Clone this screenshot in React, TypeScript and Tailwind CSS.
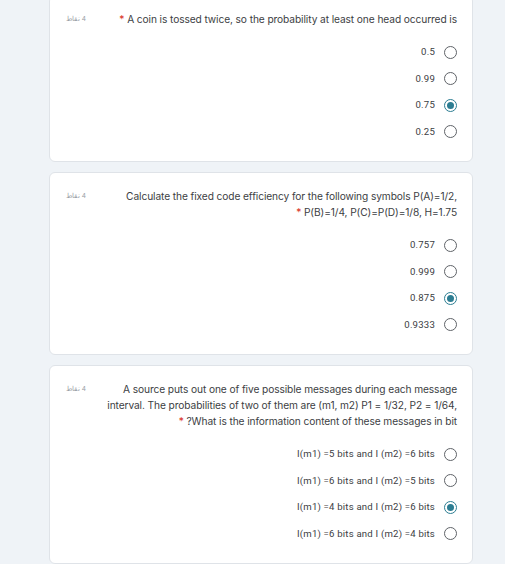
import React from 'react';

type Question = {
  lines: string[];
  options: string[];
  selected: number;
};

const QUESTIONS: Question[] = [
  {
    lines: ['* A coin is tossed twice, so the probability at least one head occurred is'],
    options: ['0.5', '0.99', '0.75', '0.25'],
    selected: 2,
  },
  {
    lines: [
      'Calculate the fixed code efficiency for the following symbols P(A)=1/2,',
      '* P(B)=1/4, P(C)=P(D)=1/8, H=1.75',
    ],
    options: ['0.757', '0.999', '0.875', '0.9333'],
    selected: 2,
  },
  {
    lines: [
      'A source puts out one of five possible messages during each message',
      'interval. The probabilities of two of them are (m1, m2) P1 = 1/32, P2 = 1/64,',
      '* ?What is the information content of these messages in bit',
    ],
    options: [
      'I(m1) =5 bits and I (m2) =6 bits',
      'I(m1) =6 bits and I (m2) =5 bits',
      'I(m1) =4 bits and I (m2) =6 bits',
      'I(m1) =6 bits and I (m2) =4 bits',
    ],
    selected: 2,
  },
];

const Radio: React.FC<{ checked: boolean }> = ({ checked }) => (
  <span
    className={`w-[13px] h-[13px] rounded-full border-[1.5px] flex items-center justify-center shrink-0 ${
      checked ? 'border-[#2c7d92]' : 'border-[#5f6368]'
    }`}
  >
    {checked && <span className="w-[7px] h-[7px] rounded-full bg-[#2c7d92]" />}
  </span>
);

const QuestionLine: React.FC<{ text: string }> = ({ text }) => {
  if (text.startsWith('* ')) {
    return (
      <div>
        <span className="text-[#d93025]">*</span> {text.slice(2)}
      </div>
    );
  }
  return <div>{text}</div>;
};

const Card: React.FC<{ q: Question; first?: boolean }> = ({ q, first }) => (
  <div
    className={`bg-white border border-[#dfe3e8] rounded-[6px] pt-[15px] pb-[16px] pl-[16px] pr-[15px] ${
      first ? '-mt-[5px]' : ''
    }`}
  >
    <div className="flex justify-between">
      <div
        dir="rtl"
        className="text-[6.5px] leading-[16px] text-[#9aa0a6] w-[40px] text-left shrink-0"
      >
        4 نقاط
      </div>
      <div className="text-[10.2px] leading-[16px] text-[#3c4043] text-right tracking-[-0.1px]">
        {q.lines.map((l, i) => (
          <QuestionLine key={i} text={l} />
        ))}
      </div>
    </div>
    <div className="mt-[12px] flex flex-col items-end">
      {q.options.map((o, i) => (
        <div key={i} className="h-[26.5px] flex items-center gap-[9px]">
          <span className="text-[9.6px] tracking-[0.2px] text-[#3c4043] font-['Roboto',sans-serif]">{o}</span>
          <Radio checked={i === q.selected} />
        </div>
      ))}
    </div>
  </div>
);

export default function App() {
  return (
    <div className="w-[505px] h-[564px] overflow-hidden bg-[#eff3f7] font-['Inter',sans-serif]">
      <div className="ml-[49px] w-[424px] flex flex-col gap-[10px]">
        {QUESTIONS.map((q, i) => (
          <Card key={i} q={q} first={i === 0} />
        ))}
      </div>
    </div>
  );
}
